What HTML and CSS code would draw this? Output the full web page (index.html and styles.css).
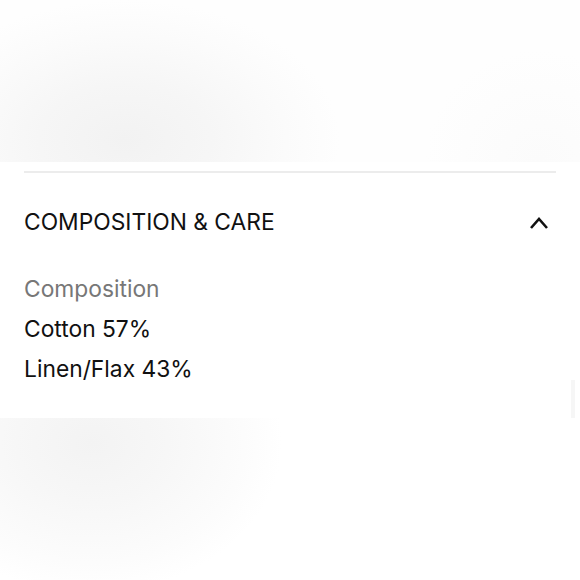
FILE: index.html
```html
<!DOCTYPE html>
<html>
<head>
<meta charset="utf-8">
<link rel="stylesheet" href="styles.css">
</head>
<body>
<div class="blur-top"></div>
<section class="accordion">
  <div class="divider"></div>
  <div class="acc-header">
    <span class="acc-title">COMPOSITION &amp; CARE</span>
    <svg class="chevron" width="20" height="14" viewBox="0 0 20 14"><path d="M2 12 L10 3 L18 12" fill="none" stroke="#111" stroke-width="2.6"/></svg>
  </div>
  <div class="acc-body">
    <div class="label">Composition</div>
    <div class="item">Cotton 57%</div>
    <div class="item">Linen/Flax 43%</div>
  </div>
  <div class="edge"></div>
</section>
<div class="blur-bottom"></div>
</body>
</html>
```
FILE: styles.css
```css
html, body {
  margin: 0;
  padding: 0;
  background: #fff;
  font-family: Inter, "Liberation Sans", sans-serif;
  color: #111;
  width: 580px;
  overflow: hidden;
}
.blur-top {
  height: 162px;
  background:
    radial-gradient(ellipse 215px 140px at 125px 140px, #f2f2f2 0%, #f6f6f6 40%, #fbfbfb 75%, rgba(255,255,255,0) 100%),
    radial-gradient(ellipse 115px 110px at 540px 160px, #fbfbfb 0%, rgba(255,255,255,0) 100%),
    #fefefe;
}
.accordion {
  padding: 9px 24px 0;
  position: relative;
}
.divider {
  height: 1.5px;
  background: #ececec;
}
.acc-header {
  height: 94px;
  padding-top: 2px;
  display: flex;
  align-items: center;
  justify-content: space-between;
}
.acc-title {
  font-size: 22.8px;
  font-weight: 400;
}
.chevron {
  margin-right: 7px;
  margin-top: 2px;
}
.acc-body {
  padding-bottom: 29px;
}
.label, .item {
  font-size: 22.8px;
  line-height: 40px;
}
.label {
  color: #777;
}
.edge {
  position: absolute;
  right: 5px;
  bottom: 0;
  width: 4px;
  height: 38px;
  background: #f6f6f6;
}
.blur-bottom {
  height: 170px;
  background:
    radial-gradient(ellipse 190px 150px at 92px 25px, #f3f3f3 0%, #f7f7f7 40%, #fcfcfc 80%, rgba(255,255,255,0) 100%),
    #fff;
}
```
